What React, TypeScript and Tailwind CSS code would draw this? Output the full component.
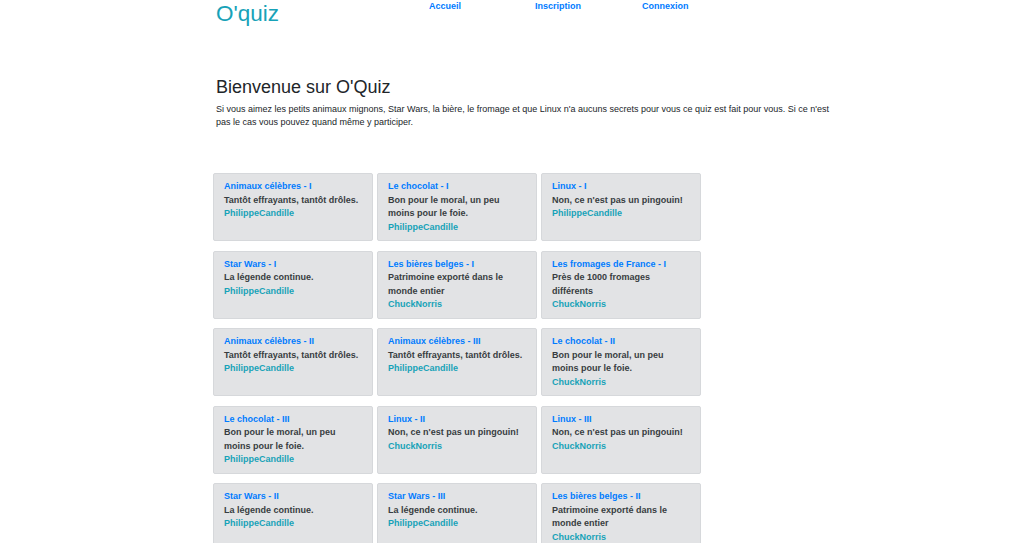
import React from 'react'

type Quiz = {
  title: string
  description: string
  author: string
}

const quizzes: Quiz[] = [
  { title: 'Animaux célèbres - I', description: 'Tantôt effrayants, tantôt drôles.', author: 'PhilippeCandille' },
  { title: 'Le chocolat - I', description: 'Bon pour le moral, un peu moins pour le foie.', author: 'PhilippeCandille' },
  { title: 'Linux - I', description: "Non, ce n'est pas un pingouin!", author: 'PhilippeCandille' },
  { title: 'Star Wars - I', description: 'La légende continue.', author: 'PhilippeCandille' },
  { title: 'Les bières belges - I', description: 'Patrimoine exporté dans le monde entier', author: 'ChuckNorris' },
  { title: 'Les fromages de France - I', description: 'Près de 1000 fromages différents', author: 'ChuckNorris' },
  { title: 'Animaux célèbres - II', description: 'Tantôt effrayants, tantôt drôles.', author: 'PhilippeCandille' },
  { title: 'Animaux célèbres - III', description: 'Tantôt effrayants, tantôt drôles.', author: 'PhilippeCandille' },
  { title: 'Le chocolat - II', description: 'Bon pour le moral, un peu moins pour le foie.', author: 'ChuckNorris' },
  { title: 'Le chocolat - III', description: 'Bon pour le moral, un peu moins pour le foie.', author: 'PhilippeCandille' },
  { title: 'Linux - II', description: "Non, ce n'est pas un pingouin!", author: 'ChuckNorris' },
  { title: 'Linux - III', description: "Non, ce n'est pas un pingouin!", author: 'ChuckNorris' },
  { title: 'Star Wars - II', description: 'La légende continue.', author: 'PhilippeCandille' },
  { title: 'Star Wars - III', description: 'La légende continue.', author: 'PhilippeCandille' },
  { title: 'Les bières belges - II', description: 'Patrimoine exporté dans le monde entier', author: 'ChuckNorris' },
]

const QuizCard: React.FC<{ quiz: Quiz }> = ({ quiz }) => (
  <div className="rounded-[2px] border border-[#d6d8db] bg-[#e2e3e5] px-[10px] py-[6px] text-[9px] font-bold leading-[13.5px]">
    <a href="#" className="block text-[#007bff]">{quiz.title}</a>
    <p className="text-[#383d41]">{quiz.description}</p>
    <p className="text-[#17a2b8]">{quiz.author}</p>
  </div>
)

const App: React.FC = () => {
  return (
    <div className="min-h-[543px] bg-white pl-[216px] text-[#212529]" style={{ fontFamily: '"Liberation Sans", Arial, sans-serif' }}>
      <div className="w-[613px]">
        <header className="flex items-start">
          <h1 className="w-[213px] text-[22.5px] leading-[27px] text-[#17a2b8]">O'quiz</h1>
          <nav className="flex text-[9px] font-bold leading-[13.5px] text-[#007bff]">
            <a href="#" className="w-[106px]">Accueil</a>
            <a href="#" className="w-[107px]">Inscription</a>
            <a href="#" className="w-[106px]">Connexion</a>
          </nav>
        </header>

        <h2 className="mt-[50px] mb-[4px] text-[18px] leading-[21.6px]">Bienvenue sur O'Quiz</h2>
        <p className="text-[9px] leading-[13.5px]">
          Si vous aimez les petits animaux mignons, Star Wars, la bière, le fromage et que Linux n'a aucuns secrets pour vous ce quiz est fait pour vous. Si ce n'est pas le cas vous pouvez quand même y participer.
        </p>
      </div>

      <div className="-ml-[3px] mt-[43.5px] grid w-[488px] grid-cols-3 gap-x-[4px] gap-y-[9.5px]">
        {quizzes.map((quiz, i) => (
          <QuizCard key={i} quiz={quiz} />
        ))}
      </div>
    </div>
  )
}

export default App
